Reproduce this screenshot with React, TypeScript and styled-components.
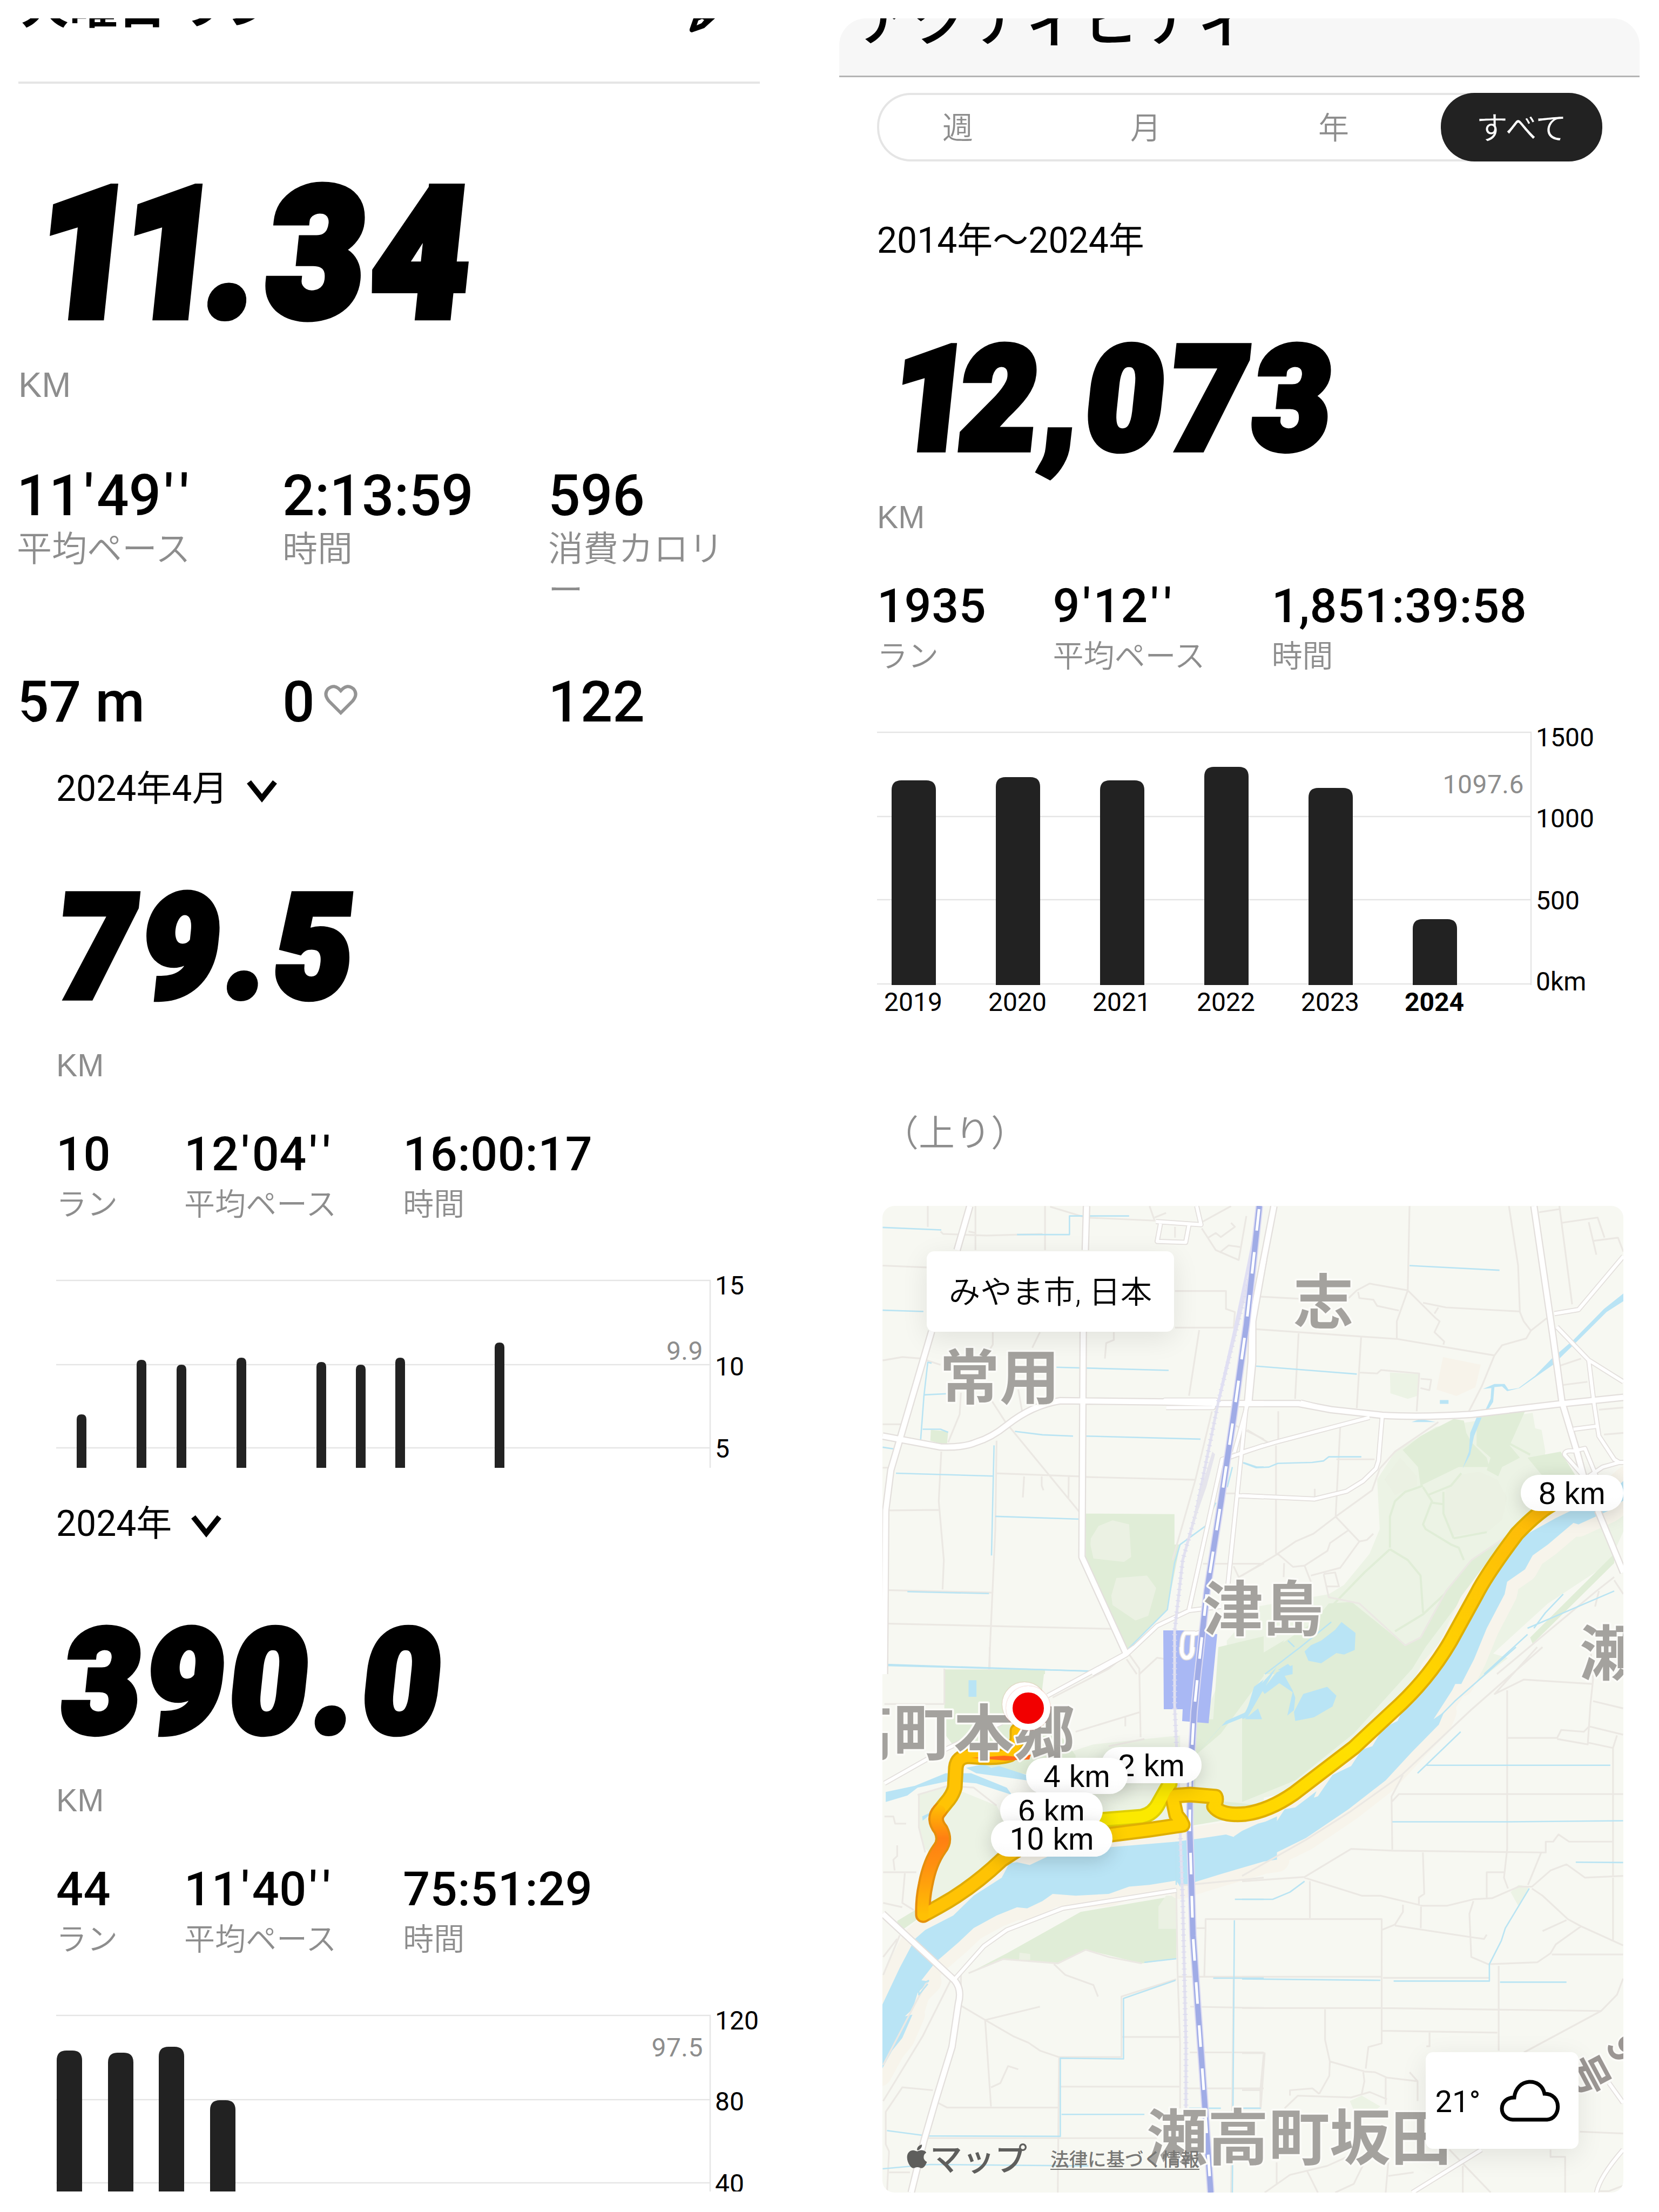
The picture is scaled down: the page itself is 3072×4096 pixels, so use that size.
import type { SVGProps } from "react";
import styled, { createGlobalStyle } from "styled-components";
import { FaApple } from "react-icons/fa";

const GlobalStyle = createGlobalStyle`
  body {
    margin: 0;
    background: #ffffff;
    color: #000000;
    font-family: Roboto, "Noto Sans CJK JP", sans-serif;
  }
`;

const Page = styled.main`
  display: flex;
  align-items: flex-start;
  gap: 147px;
  width: 3072px;
  height: 4096px;
  padding: 34px 0 0 34px;
  box-sizing: border-box;
  overflow: hidden;
`;

const Column = styled.div<{ $width: number }>`
  display: flex;
  flex-direction: column;
  flex: none;
  width: ${({ $width }) => $width}px;
`;

/* ---------- run detail ---------- */

const RunPanel = styled.section`
  height: 1309px;
  margin-bottom: 14px;
  border-radius: 0 0 0 50px;
  overflow: hidden;
`;

const RunHeader = styled.header`
  display: flex;
  align-items: flex-start;
  justify-content: space-between;
  height: 117px;
  padding: 0 82px 0 4px;
  border-bottom: 4px solid #e5e5e5;
  overflow: hidden;
`;

const RunTitle = styled.h1`
  margin: -66px 0 0;
  font-size: 90px;
  line-height: 90px;
  font-weight: 700;
  white-space: nowrap;
`;

const BigNumber = styled.div<{ $size: number; $indent: number }>`
  width: max-content;
  margin-left: ${({ $indent }) => $indent}px;
  font-size: ${({ $size }) => $size}px;
  line-height: 1.0527em;
  font-weight: 900;
  white-space: nowrap;
  transform: skewX(-6deg) scaleX(0.93);
  transform-origin: left center;
  -webkit-text-stroke: 0.05em #000000;
`;

const Glyph = styled.span<{ $tracking: number }>`
  letter-spacing: ${({ $tracking }) => $tracking}em;
`;

const Unit = styled.div<{ $size: number }>`
  color: #8d8d8d;
  font-family: "Liberation Sans", sans-serif;
  font-size: ${({ $size }) => $size}px;
  line-height: 60px;
`;

const RunNumberArea = styled.div`
  display: flex;
  flex-direction: column;
  gap: 36px;
  padding-top: 141px;
`;

const RunStats = styled.div`
  display: grid;
  grid-template-columns: 492px 492px 391px;
  grid-template-rows: 267px auto;
  row-gap: 115px;
  margin: 121px 0 0 -3px;
`;

const RunStat = styled.div`
  display: flex;
  flex-direction: column;
  gap: 5px;
`;

const RunValue = styled.div`
  display: flex;
  align-items: center;
  font-size: 105px;
  line-height: 110px;
  font-weight: 500;
  white-space: pre;

  svg {
    margin: -10px 0 0 17px;
  }
`;

const RunLabel = styled.div`
  color: #8d8d8d;
  font-size: 65px;
  line-height: 76px;
  font-weight: 350;
`;

const Prime = styled.span`
  margin: 0 0.052em;
`;

/* ---------- period summary ---------- */

const Summary = styled.section<{ $height: number }>`
  display: flex;
  flex-direction: column;
  height: ${({ $height }) => $height}px;
  padding: 64px 0 0 70px;
  box-sizing: border-box;
  overflow: hidden;
`;

const Period = styled.div`
  display: flex;
  align-items: center;
  gap: 36px;
  font-size: 66px;
  line-height: 80px;
  font-weight: 400;
  margin-bottom: 114px;

  svg {
    margin-top: 10px;
  }
`;

const SummaryUnit = styled.div`
  margin: 48px 0 89px;
`;

const SummaryStats = styled.div`
  display: flex;
  gap: 123px;
  margin-bottom: 100px;
`;

const SummaryStat = styled.div`
  display: flex;
  flex-direction: column;
  gap: 19px;
`;

const SummaryValue = styled.div`
  font-size: 88px;
  line-height: 90px;
  font-weight: 500;
  letter-spacing: 0.6px;
`;

const SummaryLabel = styled.div`
  color: #8d8d8d;
  font-size: 57px;
  line-height: 60px;
  font-weight: 350;
`;

const ChartSvg = styled.svg`
  display: block;
  flex: none;
  overflow: visible;
  font-size: 48px;
`;

/* ---------- activity column ---------- */

const ActivityHeader = styled.header`
  height: 106px;
  border-bottom: 3px solid #b4b4b4;
  border-radius: 50px 50px 0 0;
  background: #f7f7f7;
  overflow: hidden;
`;

const ActivityTitle = styled.h1`
  margin: -56px 0 0 30px;
  font-size: 108px;
  line-height: 120px;
  font-weight: 500;
  white-space: nowrap;
`;

const Segments = styled.div`
  display: flex;
  justify-content: space-between;
  width: 1343px;
  height: 127px;
  margin: 29px 0 43px 70px;
  border-radius: 62px;
  box-shadow: inset 0 0 0 4px #e5e5e5;
`;

const Segment = styled.button<{ $active?: boolean }>`
  width: 299px;
  padding: 0;
  border: none;
  border-radius: 62px;
  background: ${({ $active }) => ($active ? "#222222" : "transparent")};
  color: ${({ $active }) => ($active ? "#ffffff" : "#8d8d8d")};
  font-family: inherit;
  font-size: ${({ $active }) => ($active ? 58 : 57)}px;
  font-weight: 350;
  line-height: 132px;
`;

const Caption = styled.div`
  margin: 0 0 94px 80px;
  color: #8d8d8d;
  font-size: 67px;
  line-height: 80px;
  font-weight: 350;
`;

/* ---------- map ---------- */

const MapCard = styled.div`
  position: relative;
  width: 1372px;
  height: 1827px;
  margin-left: 80px;
  border-radius: 22px;
  background: #f7f8f2;
  overflow: hidden;
`;

const MapSvg = styled.svg`
  display: block;
  width: 1372px;
  height: 1827px;
`;

const Chip = styled.div`
  position: absolute;
  display: flex;
  align-items: center;
  justify-content: center;
  box-sizing: border-box;
  border-radius: 14px;
  background: #ffffff;
  box-shadow: 0 12px 50px rgba(0, 0, 0, 0.09);
  white-space: pre;
`;

const LocationChip = styled(Chip)`
  left: 82px;
  top: 84px;
  width: 458px;
  height: 149px;
  padding-bottom: 8px;
  font-size: 58.5px;
  font-weight: 350;
`;

const WeatherChip = styled(Chip)`
  left: 1006px;
  top: 1567px;
  width: 283px;
  height: 179px;
  gap: 36px;
  padding-right: 16px;
  font-size: 56px;

  span {
    padding-top: 5px;
  }
`;

const Pill = styled.div<{ $x: number; $y: number; $w: number }>`
  position: absolute;
  left: ${({ $x }) => $x}px;
  top: ${({ $y }) => $y}px;
  width: ${({ $w }) => $w}px;
  height: 67px;
  border-radius: 34px;
  background: linear-gradient(#ffffff 60%, #fafafa);
  box-shadow: 0 8px 34px rgba(0, 0, 0, 0.16);
  font-family: "Liberation Sans", sans-serif;
  font-size: 57px;
  line-height: 69px;
  text-align: center;
`;

const PillDigits = styled.span`
  font-family: Roboto, sans-serif;
`;

const Marker = styled.div<{ $x: number; $y: number; $color: string }>`
  position: absolute;
  left: ${({ $x }) => $x - 41}px;
  top: ${({ $y }) => $y - 41}px;
  width: 82px;
  height: 82px;
  box-sizing: border-box;
  border: 12px solid #ffffff;
  border-radius: 50%;
  background: ${({ $color }) => $color};
  box-shadow: 0 0 2px rgba(220, 80, 60, 0.5);
`;

const MapCredit = styled.div`
  position: absolute;
  left: 43px;
  bottom: 27px;
  display: flex;
  align-items: center;
  height: 80px;
  color: #5e5e5c;
  font-size: 60px;
  font-weight: 500;

  svg {
    width: 42px;
    height: 50px;
    margin-right: 3px;
  }
`;

const LegalLink = styled.span`
  margin: 14px 0 0 43px;
  border-bottom: 2px solid #777775;
  color: #777775;
  font-size: 34.5px;
  line-height: 34px;
  font-weight: 500;
`;

type Bar = { x: number; top: number; label?: string; bold?: boolean };

interface ChartProps {
  height: number;
  barWidth: number;
  radius: number;
  bars: Bar[];
  ticks: string[];
  average: string;
  averageY: number;
}

const GRID_Y = [10, 166, 320, 476];
const TICK_Y = [19, 169, 321, 471];

const Chart = ({ height, barWidth, radius, bars, ticks, average, averageY }: ChartProps) => {
  const bottom = ticks.length === 4 ? 478 : height;
  return (
    <ChartSvg width={1302} height={height}>
      {ticks.map((tick, i) => (
        <line key={tick} x1={0} x2={1212} y1={GRID_Y[i]} y2={GRID_Y[i]} stroke="#e5e5e5" strokeWidth={2.5} />
      ))}
      <line x1={1211} x2={1211} y1={10} y2={bottom} stroke="#e5e5e5" strokeWidth={2.5} />
      {bars.map(({ x, top }) => (
        <path
          key={x}
          fill="#222222"
          d={`M${x} ${bottom}V${top + radius}q0 ${-radius} ${radius} ${-radius}h${barWidth - 2 * radius}q${radius} 0 ${radius} ${radius}V${bottom}z`}
        />
      ))}
      {bars.map(({ x, label, bold }) =>
        label ? (
          <text key={x} x={x + barWidth / 2 - 1} y={526} textAnchor="middle" fontWeight={bold ? 700 : 400}>
            {label}
          </text>
        ) : null
      )}
      {ticks.map((tick, i) => (
        <text key={tick} x={1220} y={TICK_Y[i] + 17}>
          {tick}
        </text>
      ))}
      <text x={1198} y={averageY + 16} textAnchor="end" fill="#8d8d8d" letterSpacing={0.5}>
        {average}
      </text>
    </ChartSvg>
  );
};

const TRACKING: Record<string, number> = { "1": -0.075, ".": 0.065, ",": 0.05 };

const Distance = ({ value, size, indent }: { value: string; size: number; indent: number }) => (
  <BigNumber $size={size} $indent={indent}>
    {value.split("").map((char, i) => (
      <Glyph key={i} $tracking={TRACKING[char] ?? 0.046}>
        {char}
      </Glyph>
    ))}
  </BigNumber>
);

const Pace = ({ value }: { value: string }) => (
  <span>{value.split("").map((char, i) => (char === "'" ? <Prime key={i}>{char}</Prime> : char))}</span>
);

const Chevron = () => (
  <svg width="56" height="42" viewBox="0 0 56 42" fill="none" stroke="#000" strokeWidth="10">
    <path d="M4 3L28 33L52 3" />
  </svg>
);

interface PeriodSummaryProps {
  period: string;
  dropdown?: boolean;
  distance: string;
  indent: number;
  runs: string;
  pace: string;
  time: string;
  height: number;
  chart: ChartProps;
}

const PeriodSummary = ({ period, dropdown, distance, indent, runs, pace, time, height, chart }: PeriodSummaryProps) => (
  <Summary $height={height}>
    <Period>
      <span>{period}</span>
      {dropdown && <Chevron />}
    </Period>
    <Distance value={distance} size={266} indent={indent} />
    <SummaryUnit>
      <Unit $size={59}>KM</Unit>
    </SummaryUnit>
    <SummaryStats>
      <SummaryStat>
        <SummaryValue>{runs}</SummaryValue>
        <SummaryLabel>ラン</SummaryLabel>
      </SummaryStat>
      <SummaryStat>
        <SummaryValue>
          <Pace value={pace} />
        </SummaryValue>
        <SummaryLabel>平均ペース</SummaryLabel>
      </SummaryStat>
      <SummaryStat>
        <SummaryValue>{time}</SummaryValue>
        <SummaryLabel>時間</SummaryLabel>
      </SummaryStat>
    </SummaryStats>
    <Chart {...chart} />
  </Summary>
);

const MONTH_CHART: ChartProps = {
  height: 357,
  barWidth: 18,
  radius: 9,
  bars: [
    { x: 38, top: 258 },
    { x: 149, top: 157 },
    { x: 223, top: 166 },
    { x: 334, top: 153 },
    { x: 482, top: 161 },
    { x: 555, top: 166 },
    { x: 628, top: 153 },
    { x: 812, top: 125 },
  ],
  ticks: ["15", "10", "5"],
  average: "9.9",
  averageY: 141,
};

const YEAR_CHART: ChartProps = {
  height: 357,
  barWidth: 47,
  radius: 18,
  bars: [
    { x: 1, top: 75 },
    { x: 96, top: 79 },
    { x: 190, top: 68 },
    { x: 285, top: 167 },
  ],
  ticks: ["120", "80", "40"],
  average: "97.5",
  averageY: 70,
};

const ALL_CHART: ChartProps = {
  height: 540,
  barWidth: 82,
  radius: 18,
  bars: [
    { x: 27, top: 99, label: "2019" },
    { x: 220, top: 93, label: "2020" },
    { x: 413, top: 99, label: "2021" },
    { x: 606, top: 74, label: "2022" },
    { x: 799, top: 113, label: "2023" },
    { x: 992, top: 356, label: "2024", bold: true },
  ],
  ticks: ["1500", "1000", "500", "0km"],
  average: "1097.6",
  averageY: 107,
};

// The map geometry is stored per quadrant, each with its own grid.
const TILES = {
  nw: "matrix(.47194 0 0 .57398 -34 -33)",
  ne: "matrix(.47194 0 0 .57398 666 -33)",
  sw: "matrix(.47194 0 0 .66709 -34 817)",
  se: "matrix(.49235 0 0 .66709 666 817)",
};

type Layer = Partial<Record<keyof typeof TILES, string>>;

const PARKS_LIGHT: Layer = {
  ne: "M760 770L1140 725L1150 775L1175 780L1190 850L1160 1000L1500 1010V1100L1440 1210L1200 1340L1000 1490L900 1568H-60V1460L60 1350L340 1310L400 1280L500 1180L540 1100L530 940L600 850ZM580 595L695 600L690 670L650 680L582 662Z",
  se: "M0 0H860L1000 30L860 110L760 190L700 200L620 170L200 400L0 430Z M1010 680L1040 660L1080 665L1040 720ZM405 1260L450 1245L520 1275L440 1320Z",
  sw: "M1390 0H1568V470L1300 490L1270 300L1390 100ZM215 410L330 385L520 440L640 600L420 660L240 720L300 600L240 560L215 500ZM640 330L900 270L1240 245V480L940 490Z",
};

const PARKS: Layer = {
  nw: "M870 1050L1218 1052V1150L1240 1150L1190 1360L1020 1500L960 1390L870 1210ZM262 780L330 785L325 830L260 815ZM315 1555H710V1568H315Z",
  ne: "M630 845L700 800L830 745L870 750L880 790L900 820L960 870L970 900L850 900L700 960L690 900ZM920 740L1110 720L1050 830L1090 870L1020 900L1005 930L960 910L975 870L920 830ZM1120 870L1250 850L1310 930H1180ZM560 940L620 880L640 900L580 960ZM340 1340L430 1335L640 1475L700 1450L800 1300L900 1200L1090 1100L940 1240L640 1568H-20L100 1500L280 1400ZM1130 1450L1460 1180V1210L1140 1470Z",
  sw: "M315 62H708L690 170L830 300L830 380L400 320L315 240ZM410 905L560 850L850 735L1225 690V865L1090 878L870 840L760 878L540 866ZM130 760L200 730L230 745L140 790ZM1390 0L1568 -30V80L1400 240L1300 300V420L1568 440L1500 470L1290 495L1290 200L1370 200Z",
  se: "M0 190L200 0H690L640 60L420 240L200 370L0 430ZM-20 60L160 -20L-20 180Z",
};

const CLEARINGS: Layer = {
  nw: "M890 1130L920 1090L975 1072L1040 1085L1048 1190L1020 1206L900 1195L888 1150ZM990 1258L1110 1250L1146 1290L1115 1380L1065 1395L975 1345L970 1315Z",
  sw: "M1155 720L1185 690L1225 690V782H1155ZM610 848L652 852V868H608Z",
  ne: "M800 970L850 925L930 915L1000 940L1040 1000L1020 1070L960 1110L830 1120L790 1050ZM560 940L620 870L685 930V960L600 990Z",
};

const RIVER: Layer = {
  ne: "M750 1568L820 1480L900 1340L1000 1230L1110 1120L1230 1065L1330 1025L1420 1000L1510 935V1000L1440 1040L1320 1085L1300 1080L1200 1150L1140 1185L1110 1230L1040 1270L1030 1310L960 1420L910 1520L860 1600L760 1600Z",
  se: "M-30 525L0 510L60 490L110 480L105 495L125 490L160 450L200 445L280 400L270 418L285 414L340 355L410 330L450 285L490 275L530 225L585 205L600 180L650 150L680 120L720 60L790 0H880L820 75L790 120L720 200L760 180L740 215L640 290L540 370L400 450L240 530L130 570L-30 615Z",
  sw: "M60 1010L140 890L200 810L240 785L350 745L430 690L540 640L570 600L600 597L650 605L740 575L970 555L1225 540L1330 530L1420 520L1450 527L1568 487L1620 470V590L1568 595L1400 630L1240 665L1225 648L1120 660L1040 665L960 685L830 690L740 685L700 705L640 725L600 722L520 745L430 780L370 820L280 875L225 925L255 928L210 960L190 1005L160 1025L190 1020L150 1085L110 1120L60 1185Z",
};

const PONDS: Layer = {
  ne: "M245 1495L270 1475L310 1460L365 1425L390 1400L445 1435L442 1490L400 1505L370 1500L310 1533L260 1525ZM140 1555L180 1535L198 1550L190 1565ZM776 684H810V696H776ZM945 648L990 632H1030L1045 650L1085 645L1150 605L1215 550L1300 490L1420 390L1496 340V365L1430 400L1320 490L1220 570L1090 645L1040 655L1020 640L990 642L985 690L965 715H955L975 680L978 645ZM920 740H940L910 800L895 860L865 905L890 850L895 790ZM665 755L700 745L760 755Z",
  se: "M75 120L130 70L190 50V75L160 80L190 120L200 140L195 175L170 190L190 125L140 100L85 130ZM10 200L60 170L75 200ZM195 180L230 130L320 110L355 135L340 165L270 195L200 205Z M0 200L50 120L130 55L55 150L20 195Z",
  sw: "M85 402L200 385L320 350L420 350L560 390L580 410L440 378L330 372L210 390L170 412L85 430ZM400 335L470 325L500 335L530 330L660 360L720 385L640 370L440 350ZM410 92H441V138H410ZM228 470L300 445L250 470L230 482ZM1568 90L1540 130L1490 195L1400 220L1300 300L1420 205L1500 180L1530 110Z",
};

const STREAMS: Layer = {
  nw: "M73 127L303 135M600 150H806V90H1040M883 100L876 200M73 394L233 398M265 565L250 562L235 670L222 812M235 667L360 662M230 778H300L330 788M755 578L1195 588M592 785L700 796L820 800M870 800L1320 810M125 920L505 929M510 830L500 1185M515 1059L845 1068M170 1302L490 1308M73 836L120 842M85 1540L890 1558L1020 1500L1190 1360L1218 1210L1240 1150L1340 1090L1380 1015M1490 886L1540 900H1568M1445 900L1425 965",
  ne: "M0 885L55 902L105 900L140 888L275 885L320 880L340 867H468M50 574L450 600M657 250L1010 265M1460 1300L1120 1420M1260 1310L1190 1370L1145 1420M1120 1440L950 1568M350 1400L230 1480L90 1568M180 1460L205 1480",
  sw: "M85 48L890 67L1040 10M1222 925L1018 975V1143L770 1141V1358L250 1357L90 1342M775 1297H1100M1370 919H1568M1453 758L1445 1514M1100 875L1225 865M1455 700H1568M1275 1280H1400M73 1448L260 1436L550 1438L880 1440M255 925L215 940V965L250 935M1225 540V660",
  se: "M0 921L520 925M570 927H930V880L975 815L990 780L1080 670M565 485H995L1433 482M690 328H1385M822 235L660 350M1255 597L1433 598M970 930H1220M0 700H115L180 680L235 650M0 1280H70M1030 0L900 85L800 150L740 195",
};

const LANES: Layer = {
  nw: "M250 58V125M437 58V200M710 58V200M73 250L245 256M300 140L310 148L480 153L700 148M410 140L440 145M73 556L150 545L225 550L300 570M505 465V505L490 525M690 465L660 515M980 465V490L950 500L945 550M1315 458L1275 670M1220 332H1420V390L1455 400L1450 450H1220M380 660L375 730L330 820M500 685L555 755L845 1045M620 720L605 650M73 762H150M73 902H110M303 850L293 1010L313 1200L308 1295M100 1040L293 1038M85 1297L500 1305M85 1405L970 1422M520 815L515 1100L490 1555M515 920L845 930M868 932L1300 941L1210 1200M628 930L623 998M697 930V960L704 975M803 930L802 1000M1365 720L1300 941M730 60L870 95L1140 105L1120 58M1140 95L1185 80M1325 130L1380 200L1470 232L1500 90M1350 160L1380 145L1400 158L1455 125L1440 112M1395 208L1430 185L1475 190M1325 110L1440 58M1220 125V160M1455 765L1568 810M1420 985H1460M1330 1212H1568M1450 1220L1470 1255L1568 1210M1030 1520L1070 1568M1185 1520L1150 1515L1080 1568",
  ne: "M657 58L650 330M1047 58L1083 250L1090 400L1105 430L1133 460L1195 420M650 330L500 308L450 330L418 355M455 335L460 355L515 360L530 380L615 395M650 330L607 430V485M650 330L760 420L775 430L755 465L793 495L790 505M710 370L800 385L1087 398M770 385L755 405M50 455L610 487L990 540M1133 460L1115 485L1020 507L990 540L940 640L890 720M222 465L208 680M467 482L450 710M65 350L225 357M460 595L530 598L545 587L695 598L685 720M700 615L742 618L735 652L700 645M133 830V1180M142 720V820M385 770L367 1060M20 780L100 820M370 875H520M770 755L690 800L600 850L540 905L510 975L367 1060L280 1115L210 1140L130 1185L0 1250M367 1060L460 1140L385 1225L270 1250M415 1105L345 1145L335 1170L245 1218L200 1222L140 1180M460 1140L490 1135L515 1115M165 1210L163 1255M245 1218L270 1270M320 1245L340 1320L460 1340L640 1475L700 1450L800 1300L900 1200L1080 1100M320 1245L365 1240L380 1285L330 1285M1245 58L1295 375M1255 112L1395 95L1422 160M1360 110L1390 215M1380 170L1475 160L1496 205M1165 78L1245 68M1240 575L1330 550M1260 635L1355 625M1400 715L1496 708M1420 795L1496 790M285 970V1000M1460 1255L1390 1300L1000 1568M1496 1310L1460 1265M1400 1300L1385 1350",
  sw: "M315 60V158H80M493 0V62M80 470L115 470L122 490L165 490M130 550V580L115 590L120 620M75 625H205M160 628L150 710L195 730M75 710L150 722M1040 20L1080 60L1085 250M1085 180L830 235M1100 255L960 275M1030 20L960 60L740 140M1025 195V220M210 410L330 385L430 390L520 440M215 410V500L240 570M545 866L410 905M545 866L760 878L870 840L960 860L1090 878M745 880L790 910L900 938L918 970M380 995L475 1035L585 1080L645 1098L690 1120L765 1138H1010V970L1225 922M475 1035L690 998M475 1035L498 1275M498 1222L535 1210L565 1163L605 1172M290 1265L325 1278H765M765 1220H1240M1012 1082H1240M765 1140L760 1514M250 1363H1150M380 905V995M1225 670L1230 900L1240 1100L1240 1280M1240 662L1568 640M1300 780H1340V755H1568M1340 780L1335 915M1230 915H1568M1280 998L1568 1002M1278 1125H1568M1265 1225H1568M1450 920L1440 1514M1568 1130L1555 1230V1280M340 925L230 1080L75 1260M140 800L75 910M75 860L130 810M270 1230L150 1222L85 1290V1380L98 1400L90 1514M98 1458H180M250 925L200 990L75 1160",
  se: "M1130 0L860 175L600 355L410 455L240 535L0 635M1110 0L950 130L1060 90L1315 102M605 355L562 415L565 562M562 430L590 408H1433M997 120V560L985 640L1000 670M1000 252H1185L1200 230L1285 235L1305 220L1433 243M1185 255L1300 270L1310 160L1320 90L1310 0M1300 265L1395 280L1410 245M1320 150L1433 170M1395 280V815M0 650L235 638L410 560L565 565L1125 570L1075 660M1125 570H1142V540H1170L1190 520L1230 540H1395M680 570L685 685L665 695V715M235 640L450 690H520L680 718H770L870 700L940 697L1040 665L1090 665L1160 620L1220 603L1290 640L1433 635M255 650V752M0 755H525V1100L475 1110L465 1170M525 785L575 770L605 735V715M575 773L860 805L910 810L920 798M673 720L672 780M870 705L855 740L862 860L925 880L1110 875L1160 850L1180 825L1275 775M1090 670L1130 690L1225 755L1275 775L1433 828M1165 853H1433M1130 788L1220 758M920 695V625H985M0 915H525M530 918H930M0 1002H525L1350 1010L1410 965L1433 920M1350 1010L1060 1125M525 1065L960 1070M965 885V1120M705 1070V1108H693M312 1005V1090L330 1150L460 1178M330 1150L328 1190L290 1240M0 1127H85L70 1280H0M0 1230H70M160 1280L210 1245L410 1250L480 1235L545 1255M180 1245V1230L265 1225L290 1240M455 1175L460 1205L450 1240M460 1178L500 1180L545 1195L660 1205V1260M540 1195V1270M660 1205L630 1180M130 1430V1490M85 1514L180 1465L320 1440L440 1400M245 1455L285 1514M350 1514L420 1490L460 1430M550 1430L540 1514M550 1468L645 1458M780 1395L935 1514M830 1440V1514M1160 1395V1415H1215V1514M1270 1345L1433 1350M1345 1510H1380L1433 1495",
};

const PARK_PATHS: Layer = {
  ne: "M710 965L745 1010L710 1085L720 1100L820 1150L850 1160L870 1200M745 1015L790 1020M790 980L790 1050L830 1130M580 1160L580 1060L600 1010L640 980L710 960M580 1165L650 1200L700 1250L710 1370M580 1165L480 1240L350 1350M830 1130L960 1110M1050 825L1130 860M860 920L820 960L730 990M600 1430L710 1375L820 1290",
};

const ROADS_THIN: Layer = {
  nw: "M1145 108L1322 118L1305 58M1163 115L1150 172L1262 175L1275 118M1568 830L1435 868L1405 875L1275 1360M1500 700L1425 1300M1460 992L1568 996M1170 695L1180 684H1380L1370 708H1185M895 1568L1030 1505L1150 1412L1275 1363L1400 1350M1300 1435H1262Q1245 1440 1247 1500Q1265 1530 1285 1500L1290 1440L1330 1430",
  ne: "M0 852L130 820L500 740M550 735L535 880L525 905L475 945L410 978L285 1003L0 992M-30 852L20 700M1225 405L1320 392L1496 220M1235 448L1360 555L1496 625M1360 555L1380 690L1400 800L1460 875L1480 885L1415 900L1360 930M1300 778L1395 768M1340 930L1265 860Q1265 845 1300 848L1345 840L1390 930M1480 885H1496M230 690L350 715",
  sw: "M80 378L300 290L540 210M720 135L1020 20L1060 0M355 922L470 830L560 785L780 725L1225 675M1245 0Q1245 30 1265 30Q1290 30 1290 0",
  se: "M640 1514L900 1395M1333 1514Q1345 1470 1433 1395M1380 1210L1433 1265",
};

const ROADS: Layer = {
  nw: "M415 58L365 200M265 462L105 910L85 1040L80 1568M873 58L868 200M860 462L855 1190L1030 1505M73 800L300 835Q390 838 440 820Q500 805 560 765Q660 700 770 686L1180 690L1400 695H1568M1568 230L1525 430V560L1510 690",
  ne: "M125 58L40 420L35 560L20 700M-40 695H220L350 715L550 733Q700 740 900 730L1240 697L1496 675M1145 58L1220 480L1255 690L1310 840L1340 930M1395 1040L1496 1240",
  sw: "M73 740L355 925Q385 950 370 990L345 1110L280 1260L235 1370M235 1370L185 1514",
};

const LayerPaths = ({ layer, ...rest }: { layer: Layer } & SVGProps<SVGPathElement>) => (
  <>
    {(Object.keys(layer) as (keyof typeof TILES)[]).map((tile) => (
      <path key={tile} transform={TILES[tile]} d={layer[tile]} vectorEffect="non-scaling-stroke" {...rest} />
    ))}
  </>
);

const RAIL = "M698 0L674 220L650 392L627 547L601 713L584 867L577 937L570 1064L569 1150L575 1351L584 1484L596 1651L608 1827";
const SIDE_RAIL = "M683 116L622 363L580 570L556 656L541 788V924L549 1097L556 1284L562 1551V1671";

// order matters: later stretches are drawn over the earlier ones
const ROUTE = [
  { d: "M405 1137L480 1131Q502 1126 512 1105L532 1070", edge: "#dfcf04", fill: "#fbe900" },
  {
    d: "M76 1313L105 1297Q165 1264 221 1211L300 1160",
    edge: "#dfab07",
    fill: "#ffc304",
  },
  {
    d: "M424 1164L495 1155L556 1146L552 1138L544 1128L538 1100L542 1092L570 1090L617 1094Q620 1100 614 1112Q628 1130 672 1126Q716 1120 762 1088L809 1052L873 1003L945 936Q1010 878 1052 806L1100 719Q1120 680 1175 607Q1220 560 1251 547L1290 530",
    edge: "#dfaf04",
    fill: "url(#far)",
  },
  {
    d: "M250 972L250 990L236 1016Q215 1024 160 1019Q138 1020 136 1040L134 1077Q130 1092 118 1105L106 1120",
    edge: "#dfab07",
    fill: "#ffc304",
  },
  {
    d: "M106 1120Q92 1135 108 1155Q118 1175 106 1190Q88 1215 80 1257Q74 1285 75 1313",
    edge: "#e58f0c",
    fill: "url(#near)",
  },
];

const MapDrawing = () => (
  <MapSvg viewBox="0 0 1372 1827" fill="none" strokeLinejoin="round">
    <defs>
      <linearGradient id="far" gradientUnits="userSpaceOnUse" x1="560" y1="1150" x2="1250" y2="540">
        <stop offset="0" stopColor="#ffd000" />
        <stop offset="0.35" stopColor="#ffe000" />
        <stop offset="0.6" stopColor="#ffd200" />
        <stop offset="1" stopColor="#fdb60a" />
      </linearGradient>
      <linearGradient id="near" gradientUnits="userSpaceOnUse" x1="0" y1="1110" x2="0" y2="1313">
        <stop offset="0" stopColor="#ffbf03" />
        <stop offset="0.3" stopColor="#ff7f12" />
        <stop offset="0.55" stopColor="#ff9010" />
        <stop offset="1" stopColor="#ffc004" />
      </linearGradient>
    </defs>

    <LayerPaths layer={PARKS_LIGHT} fill="#ecf3e5" />
    <LayerPaths layer={PARKS} fill="#e0edd7" />
    <LayerPaths layer={CLEARINGS} fill="#ebf1e3" />
    <LayerPaths layer={PARK_PATHS} stroke="#e0edd7" strokeWidth={4} />
    <path d="M1038 280L1108 294L1098 336L1063 352L1026 340Z" fill="#f7f3ea" />
    <LayerPaths layer={RIVER} stroke="#f7f4eb" strokeWidth={46} />
    <LayerPaths layer={RIVER} fill="#b9e4f5" />
    <LayerPaths layer={PONDS} fill="#b9e4f5" />
    <LayerPaths layer={LANES} stroke="#ebe8e3" strokeWidth={3.2} />
    <LayerPaths layer={STREAMS} stroke="#b9e4f3" strokeWidth={2.6} />
    <path d="M520 786H556L620 793L604 958L555 954L556 932H521Z" fill="#a9b8f4" />
    <LayerPaths layer={ROADS_THIN} stroke="#e3dfdc" strokeWidth={9.5} />
    <LayerPaths layer={ROADS} stroke="#e3dfdc" strokeWidth={14} />
    <LayerPaths layer={ROADS_THIN} stroke="#ffffff" strokeWidth={6} />
    <LayerPaths layer={ROADS} stroke="#ffffff" strokeWidth={9.5} />

    <path d={SIDE_RAIL} stroke="#e2e1f0" strokeWidth={5} />
    <path d={SIDE_RAIL} stroke="#dcdbee" strokeWidth={9} strokeDasharray="1.5 9" />
    <path d="M611 455L616 460L600 520L572 600L585 540Z" fill="#e5e4ec" />
    <path d="M698 0Q685 80 650 240L622 363" stroke="#e0dff3" strokeWidth={5} />
    <path d={RAIL} stroke="#dcdbf2" strokeWidth={14} />
    <path d={RAIL} stroke="#a0ace6" strokeWidth={10} />
    <path d={RAIL} stroke="#ffffff" strokeWidth={5} strokeDasharray="40 40" strokeDashoffset={-6} />

    <g strokeLinecap="round">
      {ROUTE.map(({ d, edge }) => (
        <path key={d} d={d} stroke={edge} strokeWidth={29} />
      ))}
      {ROUTE.map(({ d, fill }) => (
        <path key={d} d={d} stroke={fill} strokeWidth={21} />
      ))}
    </g>
    <path d="M165 1022L226 1018L250 1020L275 1016L272 1025L228 1027Z" fill="#ff6a1a" />

    <g
      fill="#a4a29e"
      stroke="#fbfbf8"
      strokeWidth={7}
      paintOrder="stroke"
      fontFamily='"Noto Sans CJK JP", sans-serif'
      fontWeight={700}
      fontSize={111}
    >
      <text x={106} y={358}>常用</text>
      <text x={761} y={219}>志</text>
      <text x={594} y={787}>津島</text>
      <text x={1291} y={869}>瀬</text>
      <text x={-92} y={1017} fontSize={112}>高町本郷</text>
      <text x={489} y={1766} fontSize={113}>瀬高町坂田</text>
      <g fontSize={76} fill="#9b9693" textAnchor="middle">
        <text transform="translate(1310 1609) rotate(62)" y={29}>号</text>
        <text transform="translate(1374 1559) rotate(62)" y={29}>9</text>
      </g>
    </g>
  </MapSvg>
);

const App = () => (
  <>
    <GlobalStyle />
    <Page>
      <Column $width={1373}>
        <RunPanel>
          <RunHeader>
            <RunTitle>火曜日 ラン</RunTitle>
            <svg width="50" height="30" viewBox="0 0 50 30">
              <path fillRule="evenodd" d="M9 0H49L29 18L6 26Q1 25 2 20ZM18 4L15 13L24 9L29 3L25 1Z" fill="#000" />
            </svg>
          </RunHeader>
          <RunNumberArea>
            <Distance value="11.34" size={333} indent={37} />
            <Unit $size={65}>KM</Unit>
          </RunNumberArea>
          <RunStats>
            <RunStat>
              <RunValue>
                <Pace value="11'49''" />
              </RunValue>
              <RunLabel>平均ペース</RunLabel>
            </RunStat>
            <RunStat>
              <RunValue>2:13:59</RunValue>
              <RunLabel>時間</RunLabel>
            </RunStat>
            <RunStat>
              <RunValue>596</RunValue>
              <RunLabel>
                消費カロリ
                <br />ー
              </RunLabel>
            </RunStat>
            <RunValue>57 m</RunValue>
            <RunValue>
              0
              <svg width="62" height="58" viewBox="0 0 62 58" fill="none" stroke="#949494" strokeWidth="6">
                <path d="M31 53L9 31Q-1 19 7 9Q19-2 31 12Q43-2 55 9Q63 19 53 31Z" />
              </svg>
            </RunValue>
            <RunValue>122</RunValue>
          </RunStats>
        </RunPanel>
        <PeriodSummary
          period="2024年4月"
          dropdown
          distance="79.5"
          indent={6}
          runs="10"
          pace="12'04''"
          time="16:00:17"
          height={1361}
          chart={MONTH_CHART}
        />
        <PeriodSummary
          period="2024年"
          dropdown
          distance="390.0"
          indent={14}
          runs="44"
          pace="11'40''"
          time="75:51:29"
          height={1340}
          chart={YEAR_CHART}
        />
      </Column>

      <Column $width={1482}>
        <ActivityHeader>
          <ActivityTitle>アクティビティ</ActivityTitle>
        </ActivityHeader>
        <Segments>
          <Segment>週</Segment>
          <Segment>月</Segment>
          <Segment>年</Segment>
          <Segment $active>すべて</Segment>
        </Segments>
        <PeriodSummary
          period="2014年〜2024年"
          distance="12,073"
          indent={30}
          runs="1935"
          pace="9'12''"
          time="1,851:39:58"
          height={1717}
          chart={ALL_CHART}
        />
        <Caption>（上り）</Caption>
        <MapCard>
          <MapDrawing />
          <Marker $x={263} $y={923} $color="#e8f5df" />
          <Marker $x={270} $y={930} $color="#f20000" />
          <Pill $x={405} $y={1002} $w={186}>2 km</Pill>
          <Pill $x={266} $y={1022} $w={188}>4 km</Pill>
          <Pill $x={218} $y={1086} $w={190}>6 km</Pill>
          <Pill $x={201} $y={1138} $w={225}>
            <PillDigits>10</PillDigits> km
          </Pill>
          <Pill $x={1182} $y={498} $w={190}>8 km</Pill>
          <LocationChip>みやま市, 日本</LocationChip>
          <WeatherChip>
            <span>21°</span>
            <svg width="112" height="78" viewBox="0 0 112 78" fill="none" stroke="#000" strokeWidth="7">
              <path d="M24 74C-3 72-3 33 27 33C31-4 77-5 83 26C116 26 114 72 88 74Z" />
            </svg>
          </WeatherChip>
          <MapCredit>
            <FaApple />
            マップ
            <LegalLink>法律に基づく情報</LegalLink>
          </MapCredit>
        </MapCard>
      </Column>
    </Page>
  </>
);

export default App;
